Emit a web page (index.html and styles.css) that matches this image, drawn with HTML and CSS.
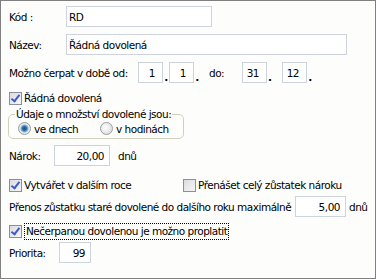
FILE: index.html
```html
<!DOCTYPE html>
<html lang="cs">
<head>
    <meta charset="UTF-8">
    <title>Typ dovolené</title>
    <link rel="stylesheet" href="styles.css">
</head>
<body>
<div class="panel">
    <div class="row r-kod">
        <span class="lbl w-name">Kód :</span>
        <input class="field f-kod" type="text" value="RD">
    </div>
    <div class="row r-nazev">
        <span class="lbl w-name">Název:</span>
        <input class="field f-nazev" type="text" value="Řádná dovolená">
    </div>
    <div class="row r-date">
        <span class="lbl w-date">Možno čerpat v době od:</span>
        <input class="field num f-day" type="text" value="1"><span class="dot">.</span>
        <input class="field num f-day" type="text" value="1"><span class="dot">.</span>
        <span class="lbl w-do">do:</span>
        <input class="field num f-day" type="text" value="31"><span class="dot dot-wide">.</span>
        <input class="field num f-day" type="text" value="12"><span class="dot">.</span>
    </div>
    <div class="row r-check1">
        <span class="check on"></span><span class="ctext">Řádná dovolená</span>
    </div>
    <fieldset class="group">
        <legend>Údaje o množství dovolené jsou:</legend>
        <div class="radios">
            <span class="radio on"></span><span class="rtext w-dny">ve dnech</span>
            <span class="radio"></span><span class="rtext">v hodinách</span>
        </div>
    </fieldset>
    <div class="row r-narok">
        <span class="lbl w-narok">Nárok:</span>
        <input class="field num f-narok" type="text" value="20,00">
        <span class="unit">dnů</span>
    </div>
    <div class="row r-check2">
        <span class="check on"></span><span class="ctext w-vytv">Vytvářet v dalším roce</span>
        <span class="check"></span><span class="ctext">Přenášet celý zůstatek nároku</span>
    </div>
    <div class="row r-prenos">
        <span class="lbl w-prenos">Přenos zůstatku staré dovolené do dalšího roku maximálně</span>
        <input class="field num f-prenos" type="text" value="5,00">
        <span class="unit u-tight">dnů</span>
    </div>
    <div class="row r-check3">
        <span class="check on"></span><span class="ctext focus">Nečerpanou dovolenou je možno proplatit</span>
    </div>
    <div class="row r-prio">
        <span class="lbl w-prio">Priorita:</span>
        <input class="field num f-prio" type="text" value="99">
    </div>
</div>
</body>
</html>
```

FILE: styles.css
```css
body { margin: 0; font-family: "DejaVu Sans", "Liberation Sans", sans-serif; font-size: 10.5px; letter-spacing: -0.5px; color: #000; }
.panel { box-sizing: border-box; width: 376px; height: 279px; border: 1px solid #808080; background: #fdfdfb; padding: 0 0 0 8px; }

.row { display: flex; align-items: center; white-space: nowrap; }
.r-kod { margin-top: 5px; height: 21px; }
.r-nazev { margin-top: 7px; height: 21px; }
.r-date { margin-top: 7px; height: 21px; }
.r-check1 { margin-top: 8px; height: 14px; }
.r-narok { margin-top: 6px; height: 21px; }
.r-check2 { margin-top: 12px; height: 14px; }
.r-prenos { margin-top: 4px; height: 21px; }
.r-check3 { margin-top: 5px; height: 18px; }
.r-prio { margin-top: 2px; height: 21px; }

.lbl { flex: none; }
.w-name { width: 57px; }
.w-date { width: 129px; }
.w-do { width: 33px; margin-left: 9px; }
.w-narok { width: 45px; }
.w-prenos { width: 286px; }
.w-prio { width: 50px; }

.field { box-sizing: border-box; height: 21px; margin: 0; padding: 0 2px; border: 1px solid #cdd4de; background: #fff; font: inherit; letter-spacing: inherit; color: #000; outline: none; }
.num { text-align: right; padding-right: 7px; }
.f-kod { width: 146px; }
.f-nazev { width: 281px; }
.f-day { width: 25px; }
.f-narok { width: 56px; padding-right: 5px; }
.f-prenos { width: 51px; padding-right: 5px; }
.f-prio { width: 32px; padding-right: 5px; }

.dot { width: 6px; align-self: flex-end; text-align: center; font-weight: bold; line-height: 12px; }
.dot-wide { width: 15px; text-align: left; padding-left: 1px; box-sizing: border-box; }
.unit { margin-left: 8px; }
.u-tight { margin-left: 3px; }

.check { flex: none; box-sizing: border-box; width: 13px; height: 13px; border: 1px solid #8b9097; background: linear-gradient(135deg, #dcdce0, #f6f6f8); position: relative; }
.check.on::after { content: ""; position: absolute; left: 3px; top: 0; width: 3px; height: 7px; border: solid #3d5cc8; border-width: 0 2px 2px 0; transform: rotate(38deg); }
.ctext { margin-left: 2px; }
.w-vytv { width: 159px; }
.focus { padding: 1px 1px 2px 1px; border: 1px dotted #000; }

.group { box-sizing: border-box; width: 176px; height: 31px; margin: 3px 0 0 -1px; padding: 0 0 0 9px; border: 1px solid #d0d0bf; border-radius: 5px; white-space: nowrap; }
.group legend { padding: 0 1px; margin-left: -3px; line-height: 13px; }
.radios { display: flex; align-items: center; margin-top: 1px; }
.radio { flex: none; box-sizing: border-box; width: 13px; height: 13px; border: 1px solid #9a9c9e; border-radius: 50%; background: radial-gradient(circle at 40% 40%, #ffffff, #d4d4d6); }
.radio.on { background: radial-gradient(circle, #1f4d7a 0, #2c6fa6 2px, #7fb7e0 3.5px, #ececef 4.5px, #d4d4d6 100%); }
.rtext { margin-left: 3px; }
.w-dny { width: 66px; }
```
